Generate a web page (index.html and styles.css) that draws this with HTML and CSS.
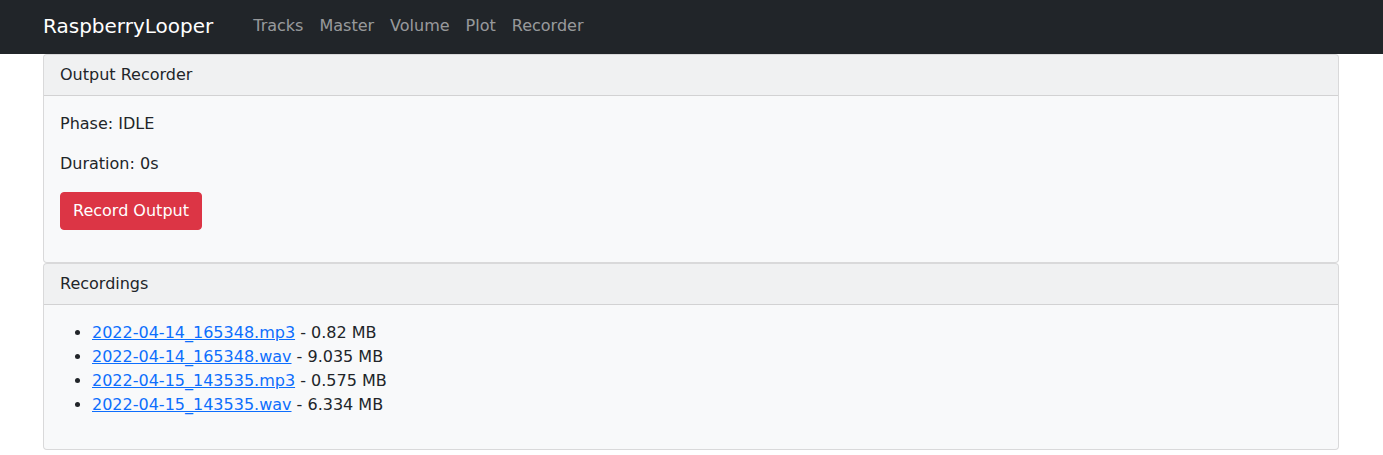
FILE: index.html
```html
<!DOCTYPE html>
<html lang="en">
<head>
<meta charset="utf-8">
<title>RaspberryLooper</title>
<link rel="stylesheet" href="styles.css">
</head>
<body>
<nav class="navbar">
  <div class="container nav-inner">
    <a class="brand" href="#">RaspberryLooper</a>
    <ul class="nav-links">
      <li><a href="#">Tracks</a></li>
      <li><a href="#">Master</a></li>
      <li><a href="#">Volume</a></li>
      <li><a href="#">Plot</a></li>
      <li><a href="#">Recorder</a></li>
    </ul>
  </div>
</nav>
<main class="container">
  <section class="card">
    <div class="card-header">Output Recorder</div>
    <div class="card-body">
      <p>Phase: IDLE</p>
      <p>Duration: 0s</p>
      <p><button class="btn-danger" type="button">Record Output</button></p>
    </div>
  </section>
  <section class="card">
    <div class="card-header">Recordings</div>
    <div class="card-body">
      <ul class="rec-list">
        <li><a href="#">2022-04-14_165348.mp3</a> - 0.82 MB</li>
        <li><a href="#">2022-04-14_165348.wav</a> - 9.035 MB</li>
        <li><a href="#">2022-04-15_143535.mp3</a> - 0.575 MB</li>
        <li><a href="#">2022-04-15_143535.wav</a> - 6.334 MB</li>
      </ul>
    </div>
  </section>
</main>
</body>
</html>
```

FILE: styles.css
```css
* { box-sizing: border-box; }
html, body {
  margin: 0;
  padding: 0;
}
body {
  font-family: "DejaVu Sans", "Liberation Sans", sans-serif;
  font-size: 16px;
  line-height: 1.5;
  color: #212529;
  background: #fff;
}
.container {
  max-width: 1320px;
  margin: 0 auto;
  padding: 0 12.5px 0 11.5px;
}
.navbar {
  background: #212529;
  height: 54px;
}
.nav-inner {
  display: flex;
  align-items: center;
  height: 54px;
  padding-bottom: 2px;
}
.brand {
  color: #fff;
  text-decoration: none;
  font-size: 20px;
  line-height: 30px;
  margin-right: 32px;
}
.nav-links {
  list-style: none;
  margin: 0;
  padding: 0;
  display: flex;
}
.nav-links a {
  display: block;
  padding: 0 8px;
  color: rgba(255, 255, 255, 0.55);
  text-decoration: none;
  line-height: 24px;
}
.card {
  border: 1px solid rgba(0, 0, 0, 0.125);
  border-radius: 4px;
  background: #f8f9fa;
  overflow: hidden;
}
.card-header {
  padding: 8px 16px;
  background: rgba(0, 0, 0, 0.03);
  border-bottom: 1px solid rgba(0, 0, 0, 0.125);
}
.card-body {
  padding: 16px;
}
.card-body p {
  margin: 0 0 16px;
}
.btn-danger {
  font-family: inherit;
  font-size: 16px;
  line-height: 24px;
  padding: 6px 12px;
  color: #fff;
  background: #dc3545;
  border: 1px solid #dc3545;
  border-radius: 4px;
  cursor: pointer;
}
.rec-list {
  margin: 0 0 16px;
  padding-left: 32px;
}
.rec-list a {
  color: #0d6efd;
}
```
